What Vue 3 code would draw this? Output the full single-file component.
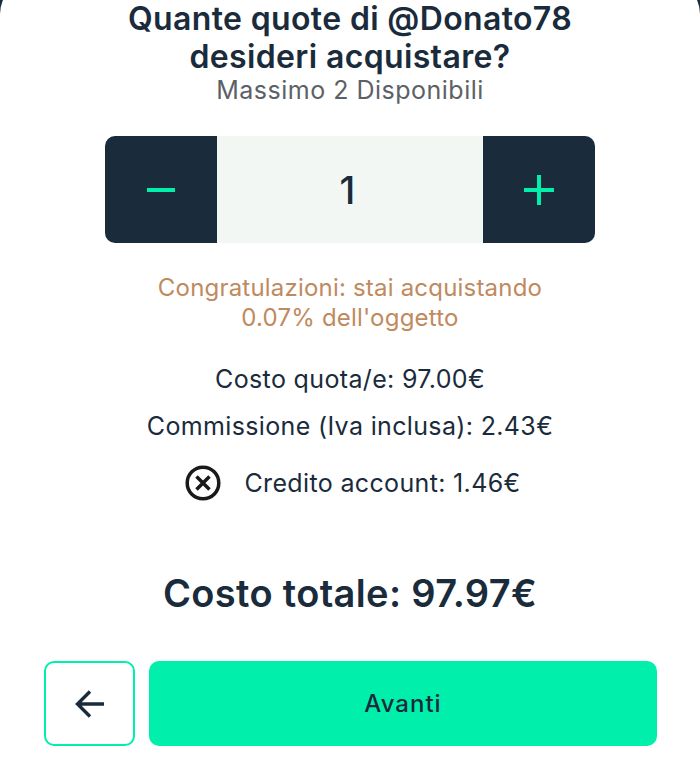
<script setup>
import { ref } from 'vue'

const quantity = ref(1)
</script>

<template>
  <div class="screen">
    <div class="sheet">
      <h1 class="title">Quante quote di @Donato78<br />desideri acquistare?</h1>
      <p class="subtitle">Massimo 2 Disponibili</p>

      <div class="stepper">
        <button class="step">
          <svg width="28" height="28" viewBox="0 0 28 28"><path d="M0 14H28" stroke="#00f0ac" stroke-width="4" /></svg>
        </button>
        <div class="qty">{{ quantity }}</div>
        <button class="step">
          <svg width="30" height="30" viewBox="0 0 30 30"><path d="M0 15H30M15 0V30" stroke="#00f0ac" stroke-width="4" /></svg>
        </button>
      </div>

      <p class="congrats">Congratulazioni: stai acquistando<br />0.07% dell'oggetto</p>

      <div class="costs">
        <div class="cost-row">Costo quota/e: 97.00€</div>
        <div class="cost-row">Commissione (Iva inclusa): 2.43€</div>
        <div class="cost-row credit">
          <svg class="x-icon" width="36" height="36" viewBox="0 0 36 36" fill="none" stroke="#1a1a1a">
            <circle cx="18" cy="18" r="15.8" stroke-width="3.5" />
            <path d="M11.5 11.5L24.5 24.5M24.5 11.5L11.5 24.5" stroke-width="3.5" />
          </svg>
          <span>Credito account: 1.46€</span>
        </div>
      </div>

      <div class="total">Costo totale: 97.97€</div>

      <div class="actions">
        <button class="back">
          <svg width="30" height="28" viewBox="0 0 30 28" fill="none" stroke="#1a2b3c" stroke-width="3.4">
            <path d="M29 14H3M15 1.5L2.5 14L15 26.5" />
          </svg>
        </button>
        <button class="next">Avanti</button>
      </div>
    </div>
  </div>
</template>

<style>
html, body {
  margin: 0;
  background: #fff;
}
</style>

<style scoped>
.screen {
  width: 700px;
  height: 775px;
  background: #1a2b3c;
  overflow: hidden;
}
.sheet {
  box-sizing: border-box;
  height: 795px;
  margin-top: -20px;
  padding-top: 20px;
  border-radius: 34px 34px 0 0;
  background: #fff;
  color: #1a2b3c;
  font-family: Inter, "Liberation Sans", sans-serif;
  text-align: center;
}
.title {
  margin: 0;
  font-size: 32px;
  line-height: 38px;
  font-weight: 600;
  letter-spacing: 0.36px;
}
.subtitle {
  margin: 0;
  font-size: 25px;
  line-height: 28px;
  letter-spacing: 0.5px;
  color: #5c6167;
}
.stepper {
  display: flex;
  width: 490px;
  height: 107px;
  margin: 32px auto 0;
  border-radius: 10px;
  overflow: hidden;
  background: #f3f7f4;
}
.step {
  width: 112px;
  border: 0;
  padding: 0;
  background: #1a2b3c;
  display: flex;
  align-items: center;
  justify-content: center;
}
.qty {
  flex: 1;
  display: flex;
  align-items: center;
  justify-content: center;
  padding-right: 5px;
  font-size: 38px;
  font-weight: 500;
}
.congrats {
  margin: 30px 0 0;
  font-size: 24px;
  line-height: 30px;
  letter-spacing: 0.2px;
  color: #c08a5e;
}
.costs {
  margin-top: 31px;
  display: flex;
  flex-direction: column;
  align-items: center;
  font-size: 25px;
  line-height: 30px;
  letter-spacing: 0.35px;
}
.cost-row {
  margin-bottom: 17px;
}
.credit {
  display: flex;
  align-items: center;
  gap: 23px;
  margin: 7px 0 0 6px;
}
.total {
  margin-top: 69px;
  font-size: 38px;
  line-height: 46px;
  font-weight: 600;
  letter-spacing: 0.35px;
}
.actions {
  display: flex;
  gap: 14px;
  margin: 45px 43px 0 44px;
  height: 85px;
}
.back {
  box-sizing: border-box;
  width: 91px;
  padding: 0;
  border: 2px solid #00f0ac;
  border-radius: 10px;
  background: #fff;
  display: flex;
  align-items: center;
  justify-content: center;
}
.next {
  flex: 1;
  border: 0;
  border-radius: 10px;
  background: #00f0ac;
  color: #1a2b3c;
  font-family: inherit;
  font-size: 24px;
  font-weight: 500;
  letter-spacing: 1px;
}
</style>
